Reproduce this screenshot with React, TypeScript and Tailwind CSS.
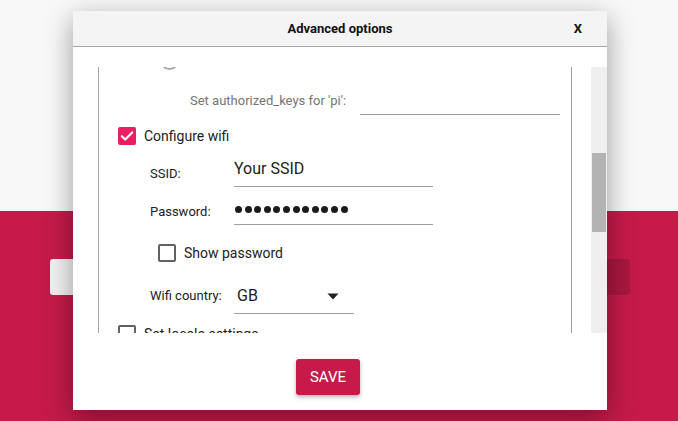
import React from "react"

function CheckBox({ checked = false }: { checked?: boolean }) {
  if (checked) {
    return (
      <div className="flex h-[18px] w-[18px] shrink-0 items-center justify-center rounded-[2px] bg-[#e91e63]">
        <svg width="18" height="18" viewBox="0 0 18 18">
          <path d="M3.8 9.2l3.4 3.3 7-7" fill="none" stroke="#fff" strokeWidth="2.2" strokeLinecap="round" strokeLinejoin="round" />
        </svg>
      </div>
    )
  }
  return <div className="h-[18px] w-[18px] shrink-0 rounded-[2px] border-2 border-[#616161]" />
}

function Dots({ count }: { count: number }) {
  return (
    <div className="flex gap-[2.6px] pl-px">
      {Array.from({ length: count }).map((_, i) => (
        <span key={i} className="h-[7px] w-[7px] rounded-full bg-[#1a1a1a]" />
      ))}
    </div>
  )
}

export default function App() {
  return (
    <div className="relative h-[421px] w-[678px] overflow-hidden font-['Roboto',sans-serif]">
      {/* page behind the dialog */}
      <div className="h-[211px] bg-[#f8f8f8]" />
      <div className="h-[210px] bg-[#c51a4a] pt-[48px]">
        <div className="flex justify-between pl-[50px] pr-[48px]">
          <div className="h-[36px] w-[180px] rounded-[3px] bg-[#f2f2f2]" />
          <div className="h-[36px] w-[180px] rounded-[3px] bg-[#f2f2f2]" />
          <div className="h-[36px] w-[180px] rounded-[4px] bg-[#a8173f]" />
        </div>
      </div>

      {/* dialog */}
      <div className="absolute left-[73px] top-[11px] flex h-[399px] w-[534px] flex-col bg-white shadow-[0_8px_26px_rgba(0,0,0,0.38)]">
        <div className="relative flex h-[36px] shrink-0 items-center justify-center border-b border-[#a6a6a6] bg-[#f4f4f4]">
          <span className="text-[13px] font-bold text-[#111]">Advanced options</span>
          <span className="absolute right-[25px] text-[13px] font-bold text-[#111]">X</span>
        </div>

        <div className="mt-[20px] flex h-[266px] shrink-0">
          <div className="ml-[25px] mr-[19px] w-[474px] overflow-hidden border-x border-[#a3a3a3]">
            <div className="-mt-[17px] flex flex-col text-[14px] leading-5 text-[#212121]">
              {/* scrolled-away radio row */}
              <div className="flex h-[20px] items-center pl-[61px]">
                <div className="h-[19px] w-[19px] rounded-full border-2 border-[#a8a8a8]" />
                <span className="ml-[8px] text-[13px] text-[#777]">Use password authentication</span>
              </div>

              <div className="mt-[12px] flex h-[33px] items-end pl-[91px]">
                <span className="mb-[4px] w-[170px] text-[13px] text-[#757575]">Set authorized_keys for 'pi':</span>
                <div className="h-full w-[200px] border-b border-[#a0a0a0]" />
              </div>

              <div className="mt-[12px] flex h-[18px] items-center gap-[8px] pl-[19px]">
                <CheckBox checked />
                <span>Configure wifi</span>
              </div>

              <div className="mt-[10px] flex h-[32px] pl-[51px]">
                <span className="w-[84px] pt-[9px] text-[13px]">SSID:</span>
                <div className="w-[199px] border-b border-[#a0a0a0] pt-[4px] text-[16px]">Your SSID</div>
              </div>

              <div className="mt-[6px] flex h-[32px] pl-[51px]">
                <span className="w-[84px] pt-[9px] text-[13px]">Password:</span>
                <div className="flex w-[199px] items-start border-b border-[#a0a0a0] pt-[13px]">
                  <Dots count={12} />
                </div>
              </div>

              <div className="mt-[19px] flex h-[18px] items-center gap-[8px] pl-[59px]">
                <CheckBox />
                <span>Show password</span>
              </div>

              <div className="mt-[19px] flex h-[33px] pl-[51px]">
                <span className="w-[84px] pt-[5px] text-[13px]">Wifi country:</span>
                <div className="flex w-[120px] items-start justify-between border-b border-[#a0a0a0] pl-[3px] pr-[15px] pt-[5px] text-[16px]">
                  <span>GB</span>
                  <svg width="12" height="7" viewBox="0 0 12 7" className="mt-[7px]">
                    <path d="M0.5 0.5h11L6 6.5z" fill="#222" />
                  </svg>
                </div>
              </div>

              <div className="mt-[11px] flex h-[18px] items-center gap-[8px] pl-[19px]">
                <CheckBox />
                <span>Set locale settings</span>
              </div>
            </div>
          </div>
          <div className="relative w-[16px] bg-[#efefef]">
            <div className="ml-px mt-[86px] h-[79px] w-[14px] bg-[#b3b3b3]" />
          </div>
        </div>

        <div className="mt-[26px] flex">
          <button className="ml-[223px] h-[36px] w-[64px] rounded-[3px] bg-[#c51a4a] text-[15px] text-white shadow-[0_2px_4px_rgba(0,0,0,0.3)]">
            SAVE
          </button>
        </div>
      </div>
    </div>
  )
}
